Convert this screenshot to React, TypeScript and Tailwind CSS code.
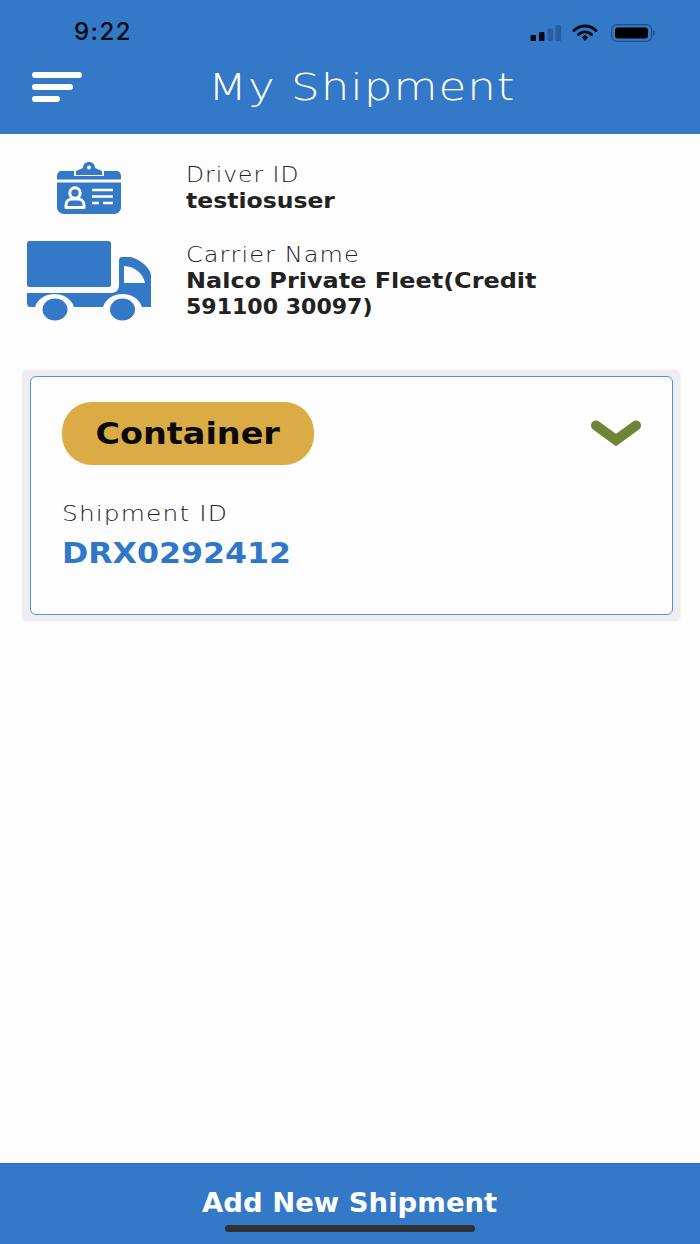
export default function App() {
  const font = { fontFamily: "'DejaVu Sans', 'Liberation Sans', sans-serif" };
  const sf = { fontFamily: "Inter, 'Liberation Sans', sans-serif" };
  return (
    <div style={font} className="w-[700px] h-[1244px] flex flex-col bg-[#fdfdfd] overflow-hidden">
      <header className="h-[134px] bg-[#3478c8] flex flex-col shrink-0">
        <div className="h-[64px] pl-[74px] pr-[45px] pt-[17px] flex items-start justify-between">
          <span style={sf} className="text-[24px] leading-[30px] font-medium text-[#020a14] tracking-[1.500px] w-[60px]">9:22</span>
          <div className="flex items-center h-[32px]">
            <svg width="32" height="18" viewBox="0 0 32 18">
              <rect x="0.500" y="11" width="5.500" height="6" rx="1" fill="#020a14" />
              <rect x="9" y="8" width="5.500" height="9" rx="1" fill="#020a14" />
              <rect x="17.500" y="4.500" width="5.500" height="12.500" rx="1" fill="#2a5d9e" />
              <rect x="25.500" y="1" width="5.500" height="16" rx="1" fill="#2a5d9e" />
            </svg>
            <svg width="26" height="18" viewBox="0 0 26 18" className="ml-[10px]">
              <path d="M2 6.500 C8.500 0.500 17.500 0.500 24 6.500" fill="none" stroke="#020a14" strokeWidth="3" strokeLinecap="round" />
              <path d="M6.500 10.500 C10.500 7 15.500 7 19.500 10.500" fill="none" stroke="#020a14" strokeWidth="3" strokeLinecap="round" />
              <path d="M9.800 13.300 L13 10.800 L16.200 13.300 L13 17 Z" fill="#020a14" />
            </svg>
            <svg width="44" height="18" viewBox="0 0 44 18" className="ml-[13px]">
              <rect x="0.700" y="0.700" width="40" height="16.600" rx="5" fill="none" stroke="#1f4d88" strokeWidth="1.200" />
              <rect x="4" y="3.500" width="33" height="11" rx="3" fill="#000" />
              <rect x="42" y="6.500" width="1.500" height="5" rx="0.700" fill="#1f4d88" />
            </svg>
          </div>
        </div>
        <div className="relative flex items-center h-[46px]">
          <div className="ml-[32px] w-[50px] flex flex-col gap-[5.500px]">
            <div className="w-[50px] h-[6.500px] rounded-full bg-white" />
            <div className="w-[41px] h-[6.500px] rounded-full bg-white" />
            <div className="w-[28px] h-[6.500px] rounded-full bg-white" />
          </div>
          <h1 className="ml-[126px] text-[38px] leading-[46px] font-extralight text-white tracking-[0.8px] whitespace-nowrap origin-left scale-x-[1.19]">My Shipment</h1>
        </div>
      </header>

      <main className="flex-1 flex flex-col">
        <section className="flex items-center h-[54px] mt-[27px] pl-[57px]">
          <svg width="64" height="54" viewBox="0 0 64 54">
            <path fillRule="evenodd" fill="#3478c8" d="M19 10 L26 7 C26 3 29 1 32 1 C35 1 38 3 38 7 L45 10 L45 14 L19 14 Z M32 4.500 A2 2 0 1 0 32.010 4.500 Z" />
            <path fill="#3478c8" d="M4 10 L17 10 L17 15 L47 15 L47 10 L60 10 C62 10 64 12 64 15 L64 18.500 L0 18.500 L0 15 C0 12 2 10 4 10 Z" />
            <path fill="#3478c8" d="M0 21.500 L64 21.500 L64 46 C64 50 61 53 57 53 L7 53 C3 53 0 50 0 46 Z" />
            <circle cx="18" cy="32" r="5.200" fill="none" stroke="#fff" strokeWidth="3" />
            <path d="M9 46.500 L9 44 C9 40 12 38 15 38 L21 38 C24 38 27 40 27 44 L27 46.500 Z" fill="none" stroke="#fff" strokeWidth="3" strokeLinejoin="round" />
            <path d="M35 29 L56 29 M35 35.500 L56 35.500" stroke="#fff" strokeWidth="2.600" />
            <path d="M35 42 L42 42 M46 42 L56 42" stroke="#fff" strokeWidth="2.600" />
          </svg>
          <div className="ml-[65px] leading-[26px]">
            <div className="text-[22px] font-extralight text-[#222] tracking-[1px] origin-left scale-x-[1.06] whitespace-nowrap">Driver ID</div>
            <div className="text-[21px] font-bold text-[#222] origin-left scale-x-[1.12] whitespace-nowrap">testiosuser</div>
          </div>
        </section>

        <section className="flex items-start mt-[26px] pl-[27px]">
          <svg width="125" height="80" viewBox="0 0 125 80" className="shrink-0">
            <rect x="0" y="0" width="84" height="46" rx="2.500" fill="#3478c8" />
            <path fillRule="evenodd" fill="#3478c8" d="M92 20 C92 17 93 16 95 16 L103 16 C111 17 124 27 124 34 L124 66 L115 66 C112 57 104 53 95.500 53 C87 53 79 57 76 66 L47 66 C44 57 36 53 27.500 53 C19 53 11 57 8 66 L3 66 C1 66 0 64 0 62 L0 52 L84 52 C89 52 92 49 92 44 Z M97 25 L97 42 L118 42 C117 34 108 25 97 25 Z" />
            <ellipse cx="28" cy="68.500" rx="12.500" ry="11" fill="#3478c8" />
            <ellipse cx="95.500" cy="68.500" rx="12.500" ry="11" fill="#3478c8" />
          </svg>
          <div className="ml-[34px] pt-[1px] leading-[26px]">
            <div className="text-[22px] font-extralight text-[#222] tracking-[1px] origin-left scale-x-[1.09] whitespace-nowrap">Carrier Name</div>
            <div className="text-[21px] font-bold text-[#222] origin-left scale-x-[1.14] whitespace-nowrap">Nalco Private Fleet(Credit</div>
            <div className="text-[21px] font-bold text-[#222] origin-left scale-x-[1.05] whitespace-nowrap">591100 30097)</div>
          </div>
        </section>

        <section className="ml-[22px] mr-[20px] mt-[49px] h-[251px] pt-[6px] pl-[8px] pr-[7px] pb-[6px] bg-[#eeeeee] rounded-[5px] shadow-[0_0_3px_#eeeeee]">
          <div className="h-full bg-[#fdfdfd] border border-[#5b8fdc] rounded-[6px] pl-[31px] pr-[31px] pt-[25px]">
            <div className="flex items-start justify-between">
              <div className="w-[252px] h-[63px] rounded-[30px] bg-[#dbab45] flex items-center justify-center">
                <span className="text-[30px] font-bold text-[#0a0a0a] scale-x-[1.115]">Container</span>
              </div>
              <svg width="50" height="28" viewBox="0 0 50 28" className="mt-[18px]">
                <path d="M5 5.500 L25 20 L45 5.500" fill="none" stroke="#6f8436" strokeWidth="10" strokeLinecap="round" strokeLinejoin="miter" />
              </svg>
            </div>
            <div className="mt-[34px] text-[22px] leading-[30px] font-extralight text-[#222] tracking-[1px] origin-left scale-x-[1.13] whitespace-nowrap">Shipment ID</div>
            <div className="mt-[6px] text-[29px] leading-[36px] font-bold text-[#2f77c9] origin-left scale-x-[1.09] whitespace-nowrap">DRX0292412</div>
          </div>
        </section>
      </main>

      <footer className="h-[81px] shrink-0 bg-[#3478c8] border-t border-[#2a72d0] flex flex-col items-center">
        <div className="mt-[24px] text-[26px] leading-[30px] font-bold text-white scale-x-[1.057] whitespace-nowrap">Add New Shipment</div>
        <div className="mt-[7px] w-[250px] h-[7px] rounded-full bg-[#2f3033]" />
      </footer>
    </div>
  );
}
